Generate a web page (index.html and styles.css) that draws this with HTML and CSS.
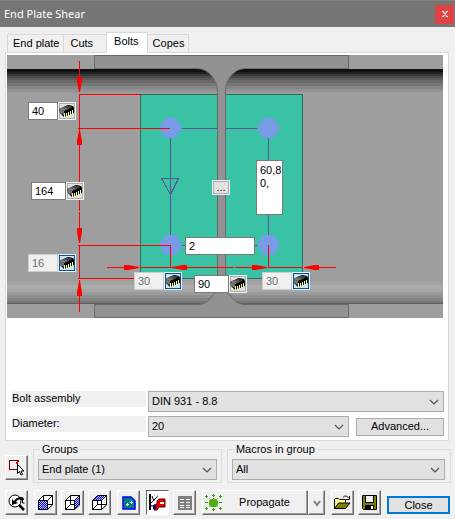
FILE: index.html
```html
<!DOCTYPE html>
<html lang="en">
<head>
<meta charset="utf-8">
<title>End Plate Shear</title>
<link rel="stylesheet" href="styles.css">
</head>
<body>
<svg class="defs" aria-hidden="true">
  <defs>
    <pattern id="hatch" width="2" height="2" patternUnits="userSpaceOnUse">
      <rect width="2" height="2" fill="#c8c8ff"/>
      <rect width="1" height="1" fill="#00f"/><rect x="1" y="1" width="1" height="1" fill="#00f"/>
    </pattern>
    <linearGradient id="chipTop" x1="0" y1="1" x2="1" y2="0">
      <stop offset="0" stop-color="#a8a8a8"/><stop offset=".5" stop-color="#585858"/><stop offset="1" stop-color="#101010"/>
    </linearGradient>
    <symbol id="chip" viewBox="0 0 16 14">
      <path d="M0 5 9 1 14 2 15 4V9L5 13 1 9Z" fill="#000"/>
      <path d="M0 5 9 1 14 3 5 7Z" fill="url(#chipTop)"/>
      <path d="M0 5 5 7V11L1 9Z" fill="#707070"/>
      <path d="M5 9h1v4h-1zM7 9h1v4h-1zM9 8h1v4h-1zM11 7h1v4h-1zM13 6h1v4h-1z" fill="#ffff90" shape-rendering="crispEdges"/>
    </symbol>
  </defs>
</svg>
<div class="dialog">
  <header class="titlebar">
    <h1>End Plate Shear</h1>
    <button class="close-x" type="button" aria-label="Close window"><svg width="6" height="6" viewBox="0 0 6 6"><path d="M1 .5 5 5.500M5 .5 1 5.500M0 .5h2M4 .5h2M0 5.500h2M4 5.500h2" stroke="#fff" stroke-width="1.200"/></svg></button>
  </header>

  <main>
    <nav class="tabs" role="tablist">
      <button role="tab" type="button">End plate</button>
      <button role="tab" type="button" class="cuts">Cuts</button>
      <button role="tab" type="button" class="active" aria-selected="true">Bolts</button>
      <button role="tab" type="button">Copes</button>
    </nav>
    <section class="panel">
      <div class="canvas">
        <svg class="drawing" width="436" height="263" viewBox="7 55 436 263">
          <rect x="7" y="55" width="436" height="263" fill="#9e9e9e"/>
          <g shape-rendering="crispEdges">
            <path fill="#111" d="M7 69h436v3H7z"/><path fill="#222" d="M7 72h436v2H7z"/>
            <path fill="#383838" d="M7 74h436v2H7z"/><path fill="#4b4b4b" d="M7 76h436v2H7z"/>
            <path fill="#5b5b5b" d="M7 78h436v2H7z"/><path fill="#696969" d="M7 80h436v3H7z"/>
            <path fill="#777" d="M7 83h436v3H7z"/><path fill="#858585" d="M7 86h436v3H7z"/>
            <path fill="#929292" d="M7 89h436v3H7z"/>
            <path fill="#a4a4a4" d="M7 282h436v3H7z"/><path fill="#acacac" d="M7 285h436v4H7z"/>
            <path fill="#a6a6a6" d="M7 289h436v3H7z"/><path fill="#9b9b9b" d="M7 292h436v3H7z"/>
            <path fill="#909090" d="M7 295h436v3H7z"/><path fill="#848484" d="M7 298h436v3H7z"/>
            <path fill="#777" d="M7 301h436v2H7z"/><path fill="#606060" d="M7 303h436v1H7z"/>
            <path d="M140.500 94.500H302.500V278.500H140.500Z" fill="#39c2a4" stroke="#2f6f60"/>
            <path d="M170.500 128v117M268.500 128v117M170 128.500h98M170 245.500h98M161.500 178.500h17l-8 16z" fill="none" stroke="#5a5794"/>
          </g>
          <path d="M94.500 55.500H348.500V68.500H245C234 69 225.500 79 225.500 92V278C226 293 233 304 245 304.500H348.500V317.500H94.500V304.500H198C209 304 217.500 293 217.500 278V92C217.500 79 208 69 198 68.500H94.500Z" fill="#929292" stroke="#696969"/>
          <g fill="#789be7">
            <path d="M159 128l6-10h11l6 10-6 10h-11z"/><path d="M257 128l6-10h11l6 10-6 10h-11z"/>
            <path d="M159 245l6-10h11l6 10-6 10h-11z"/><path d="M257 245l6-10h11l6 10-6 10h-11z"/>
          </g>
          <g shape-rendering="crispEdges">
            <path d="M79.500 61v31M79.500 94v117M79.500 212v29M79.500 245v34M79.500 280v32M79 94.500h62M78 128.500h92M78 245.500h93M78 278.500h57M170.500 245v23M268.500 245v23M107 267.500h32M140 267.500h94M235 267.500h32M268 267.500h35M304 267.500h32" fill="none" stroke="#f00"/>
          </g>
          <path fill="#f00" d="M77 77h5v4l-2 11h-1l-2-11zM77 145h5v-4l-2-11h-1l-2 11zM77 228h5v4l-2 11h-1l-2-11zM77 296h5v-4l-2-11h-1l-2 11zM124 265v5h4l11-2v-1l-11-2zM187 265v5h-4l-11-2v-1l11-2zM252 265v5h4l11-2v-1l-11-2zM319 265v5h-4l-11-2v-1l11-2z"/>
        </svg>
        <div class="dim d-top"><input aria-label="Top edge distance" value="40"><button type="button" aria-label="Default top edge"><svg><use href="#chip"/></svg></button></div>
        <div class="dim wide d-height"><input aria-label="Bolt height" value="164"><button type="button" aria-label="Default height"><svg><use href="#chip"/></svg></button></div>
        <div class="dim auto d-bottom"><input aria-label="Bottom edge distance" value="16" disabled><button type="button" aria-label="Default bottom edge"><svg><use href="#chip"/></svg></button></div>
        <div class="dim auto d-left"><input aria-label="Left edge distance" value="30" disabled><button type="button" aria-label="Default left edge"><svg><use href="#chip"/></svg></button></div>
        <div class="dim wide d-gauge"><input aria-label="Bolt gauge" value="90"><button type="button" aria-label="Default gauge"><svg><use href="#chip"/></svg></button></div>
        <div class="dim auto d-right"><input aria-label="Right edge distance" value="30" disabled><button type="button" aria-label="Default right edge"><svg><use href="#chip"/></svg></button></div>
        <input class="columns" aria-label="Bolt columns" value="2">
        <textarea class="spacing" aria-label="Bolt spacing">60,80,</textarea>
        <button class="more" type="button">...</button>
      </div>
      <div class="form">
        <label for="assembly">Bolt assembly</label>
        <select id="assembly"><option>DIN 931 - 8.8</option></select>
        <label for="diameter">Diameter:</label>
        <div class="pair">
          <select id="diameter"><option>20</option></select>
          <button class="flat" type="button">Advanced...</button>
        </div>
      </div>
    </section>

    <div class="groups">
      <button class="tool" type="button" aria-label="Pick group"><svg width="17" height="17" viewBox="0 0 17 17"><path d="M1 1.500h10M1.500 1v10M1 10.500h8M9.500 2v6" fill="none" stroke="#800000"/><path d="M8 5l3-3M8 3l2 2" stroke="#e00"/><path d="M9.500 5.500v9l2-2 1.500 3.500 1.500-.5-1.500-3.500h3z" fill="#fff" stroke="#000"/></svg></button>
      <fieldset class="group-a"><legend>Groups</legend><select aria-label="Groups"><option>End plate (1)</option></select></fieldset>
      <fieldset class="group-b"><legend>Macros in group</legend><select aria-label="Macros in group"><option>All</option></select></fieldset>
    </div>

    <div class="toolbar">
      <button class="tool" type="button" aria-label="Find"><svg width="17" height="17" viewBox="0 0 17 17"><circle cx="7" cy="7" r="6" fill="#fff" stroke="#000"/><path d="M11 11l5 5" stroke="#000" stroke-width="2.500"/><path d="M4 11V5l2 2c2-3 4-4 7-4 2 0 3 1 3 3h-3c-2-1-4 0-5 2l2 1z" fill="#000"/><path d="M14.500 5v4h2" fill="none" stroke="#000"/></svg></button>
      <div class="set">
        <button class="tool" type="button" aria-label="Front view"><svg width="15" height="15" viewBox="0 0 15 15"><path d="M5 .5h9.500V10l-5 4.500h-9V5.500z" fill="#fff"/><path d="M.5 5.500h9v9h-9z" fill="url(#hatch)"/><path d="M.5 5.500h9v9h-9zL5.500.5h9V10l-5 4.500M9.500 5.500l5-5M5.500.5v5M10 9.500h4" fill="none" stroke="#000"/></svg></button>
        <button class="tool" type="button" aria-label="Side view"><svg width="15" height="15" viewBox="0 0 15 15"><path d="M5 .5h9.500V10l-5 4.500h-9V5.500z" fill="#fff"/><path d="M9.500 5.500l5-5V10l-5 4.500z" fill="url(#hatch)"/><path d="M.5 5.500h9v9h-9zL5.500.5h9V10l-5 4.500M9.500 5.500l5-5M5.500.5v9M.5 14.500l5-5h4" fill="none" stroke="#000"/></svg></button>
        <button class="tool" type="button" aria-label="Top view"><svg width="15" height="15" viewBox="0 0 15 15"><path d="M5 .5h9.500V10l-5 4.500h-9V5.500z" fill="#fff"/><path d="M.5 5.500l5-5h9l-5 5z" fill="url(#hatch)"/><path d="M.5 5.500h9v9h-9zL5.500.5h9V10l-5 4.500M9.500 5.500l5-5M5.500 5v4.500h9M.5 14.500l5-5" fill="none" stroke="#000"/></svg></button>
      </div>
      <button class="tool" type="button" aria-label="Plate"><svg width="14" height="14" viewBox="0 0 14 14"><path d="M1 1h8l4 4v8H1z" fill="#008080" stroke="#00f" stroke-width="1.500"/><path d="M4 8.500h3M5.500 7v3M8 6.500h3M9.500 5v3" stroke="#fff"/></svg></button>
      <div class="set">
        <button class="tool pressed" type="button" aria-label="Bolt tool"><svg width="17" height="17" viewBox="0 0 17 17"><path d="M0 0h2v16H0z"/><path d="M2 9l7-7M3 2l2 5M2 12h5" fill="none" stroke="#000"/><path d="M5 1h1M8 2h1" stroke="#888"/><path d="M8 7l2-2h6v8h-6l-2 3H5v-5l3-1z" fill="#e00000" stroke="#600000"/><path d="M11 8h4v2h-4z" fill="#eee"/><path d="M4 11h3v4H4z" fill="#000090"/></svg></button>
        <button class="tool" type="button" aria-label="Table"><svg width="14" height="14" viewBox="0 0 14 14"><path d="M0 0h14v14H0z" fill="#808080"/><path d="M2 3.500h4M8 3.500h4M2 6.500h4M8 6.500h4M2 9.500h4M8 9.500h4M2 11.500h4M8 11.500h4" stroke="#fff"/></svg></button>
      </div>
      <div class="split">
        <button class="tool propagate" type="button"><svg width="17" height="17" viewBox="0 0 17 17"><path d="M4 4l9 9M13 4l-9 9M8.500 2v13M2 8.500h13" stroke="#d05020" stroke-dasharray="1 1"/><path d="M6 5h5l2 2v4l-2 2H6l-2-2V7z" fill="#4cb010"/><path d="M0 2.500h3M1.500 1v3M7 1.500h3M8.500 0v3M14 2.500h3M15.500 1v3M0 8.500h3M14 8.500h3M0 14.500h3M1.500 13v3M7 15.500h3M8.500 14v3M14 14.500h3M15.500 13v3" stroke="#3a9a10"/></svg><span>Propagate</span></button>
        <button class="tool drop" type="button" aria-label="Propagate options"><svg width="8" height="8" viewBox="0 0 8 8"><path d="M1 2l3 4 3-4" fill="none" stroke="#808080" stroke-width="2"/></svg></button>
      </div>
      <div class="set">
        <button class="tool" type="button" aria-label="Open"><svg width="17" height="15" viewBox="0 0 17 15"><path d="M.5 13.500v-9l1-1h3l1 1h6v3" fill="#ffff90" stroke="#000"/><path d="M.5 13.500l4-5.500h11.500l-4.500 5.500z" fill="#808000" stroke="#000"/><path d="M9 2.500c1-2 4-2 5.500.5M15.500 1v3.500H12" fill="none" stroke="#000"/></svg></button>
        <button class="tool" type="button" aria-label="Save"><svg width="15" height="15" viewBox="0 0 15 15"><path d="M.5.5h14v14h-13l-1-1z" fill="#808000" stroke="#000"/><path d="M3.500.5h8v7h-8z" fill="#f0f0f0" stroke="#000"/><path d="M3 10h9v4H3z" fill="#000"/><path d="M9 11h2v3H9z" fill="#fff"/></svg></button>
      </div>
      <button class="flat close" type="button">Close</button>
    </div>
  </main>
</div>
</body>
</html>
```
FILE: styles.css
```css
* { box-sizing: border-box; }
body {
  margin: 0;
  min-height: 100vh;
  background: #f0f0f0;
  color: #000;
  font: 11px/13px "Liberation Sans", Arial, sans-serif;
}
button, input, select, textarea {
  margin: 0;
  padding: 0;
  border-radius: 0;
  font: inherit;
  color: inherit;
}
svg { display: block; flex: none; }
.defs { position: absolute; width: 0; height: 0; }

.titlebar {
  display: flex;
  align-items: center;
  justify-content: space-between;
  height: 27px;
  padding: 0 1px 0 4px;
  background: #767676;
  border-top: 1px solid #828282;
}
.titlebar h1 {
  margin: 0;
  color: #fff;
  font: 11px/16px "Noto Sans", "Open Sans", sans-serif;
}
.close-x {
  display: grid;
  place-items: center;
  width: 19px;
  height: 19px;
  border: 0;
  background: #e04343;
}

main { padding: 5px 5px 4px; }

.tabs { display: flex; align-items: flex-end; padding-left: 2px; height: 20px; }
.tabs button {
  height: 18px;
  padding: 0 4px 0 5px;
  border: 1px solid #d9d9d9;
  border-width: 1px 1px 0 0;
  background: #f0f0f0;
}
.tabs button:first-child { border-left-width: 1px; }
.tabs .cuts { padding: 0 13px 0 6px; border-right: 0; }
.tabs .active {
  position: relative;
  height: 21px;
  margin-bottom: -1px;
  padding: 0 8px 3px 7px;
  border-left-width: 1px;
  background: #fff;
}
.panel {
  margin-right: 1px;
  padding: 2px 4px 3px 1px;
  border: 1px solid #d9d9d9;
  background: #fff;
}

.canvas { position: relative; }
.dim { position: absolute; display: flex; height: 18px; }
.dim input, .columns, .spacing {
  border: 1px solid #7a7a7a;
  background: #fff;
}
.dim input { width: 30px; padding-left: 3px; }
.dim.wide input { width: 35px; }
.dim input:disabled {
  border-color: #ccc;
  background: #f0f0f0;
  color: #6d6d6d;
}
.dim button {
  display: grid;
  place-items: center;
  width: 18px;
  border: 1px solid #f0f0f0;
  background: #e1e1e1;
  box-shadow: inset 0 0 0 1px #adadad;
}
.dim button svg { width: 16px; height: 14px; }
.dim.auto button { background: #cce4f7; box-shadow: inset 0 0 0 1px #005499; }
.d-top { left: 21px; top: 47px; }
.d-height { left: 24px; top: 127px; }
.d-bottom { left: 21px; top: 199px; }
.d-left { left: 127px; top: 217px; }
.d-gauge { left: 187px; top: 220px; }
.d-right { left: 255px; top: 217px; }
.columns {
  position: absolute;
  left: 178px;
  top: 182px;
  width: 70px;
  height: 18px;
  padding-left: 3px;
}
.spacing {
  position: absolute;
  left: 249px;
  top: 105px;
  width: 27px;
  height: 55px;
  padding: 3px 0 0 3px;
  resize: none;
  overflow: hidden;
  word-break: break-all;
}
.more {
  position: absolute;
  left: 205px;
  top: 125px;
  width: 18px;
  height: 15px;
  border: 1px solid #f0f0f0;
  background: #e1e1e1;
  box-shadow: inset 0 0 0 1px #adadad;
  line-height: 11px;
}

.form {
  display: grid;
  grid-template-columns: 134px 1fr;
  gap: 4px 2px;
  margin: 73px 0 0 5px;
  align-items: start;
}
.form label { height: 16px; background: #f0f0f0; line-height: 15px; }
select {
  appearance: none;
  height: 21px;
  padding: 0 20px 0 3px;
  border: 1px solid #adadad;
  background: #e1e1e1 url("data:image/svg+xml,%3Csvg xmlns='http://www.w3.org/2000/svg' width='10' height='6'%3E%3Cpath d='M1 1l4 4 4-4' fill='none' stroke='%23505050' stroke-width='1.200'/%3E%3C/svg%3E") no-repeat right 4px center;
}
.pair { display: flex; align-items: center; gap: 7px; }
.pair select { flex: 1; }
.pair .flat { width: 88px; height: 18px; }
.flat { border: 1px solid #adadad; background: #e1e1e1; }

.groups { display: flex; align-items: flex-end; gap: 5px; margin: 2px -1px 0 0; }
.groups .tool { margin-bottom: 3px; }
fieldset {
  min-width: 0;
  margin: 0;
  padding: 3px 4px 2px;
  border: 1px solid #dcdcdc;
}
.group-a { flex: 188; }
.group-b { flex: 224; padding-right: 5px; }
legend { margin-left: 2px; padding: 0 2px; }
fieldset select { display: block; width: 100%; }

.tool {
  display: flex;
  align-items: center;
  justify-content: center;
  flex: none;
  width: 23px;
  height: 25px;
  border: 1px solid;
  border-color: #fff #696969 #696969 #fff;
  background: #f0f0f0;
  box-shadow: inset -1px -1px 0 #a0a0a0;
}
.tool.pressed {
  border-color: #696969 #fff #fff #696969;
  background: #fff;
  box-shadow: none;
}
.toolbar { display: flex; gap: 6px; margin-top: 7px; }
.set { display: flex; gap: 4px; }
.split { display: flex; flex: 1; }
.tool.propagate { flex: 1; justify-content: flex-start; padding-left: 2px; }
.propagate span { flex: 1; text-align: center; }
.tool.drop { width: 17px; }
.close { width: 63px; height: 18px; margin-top: 6px; border: 2px solid #0078d7; }
```
